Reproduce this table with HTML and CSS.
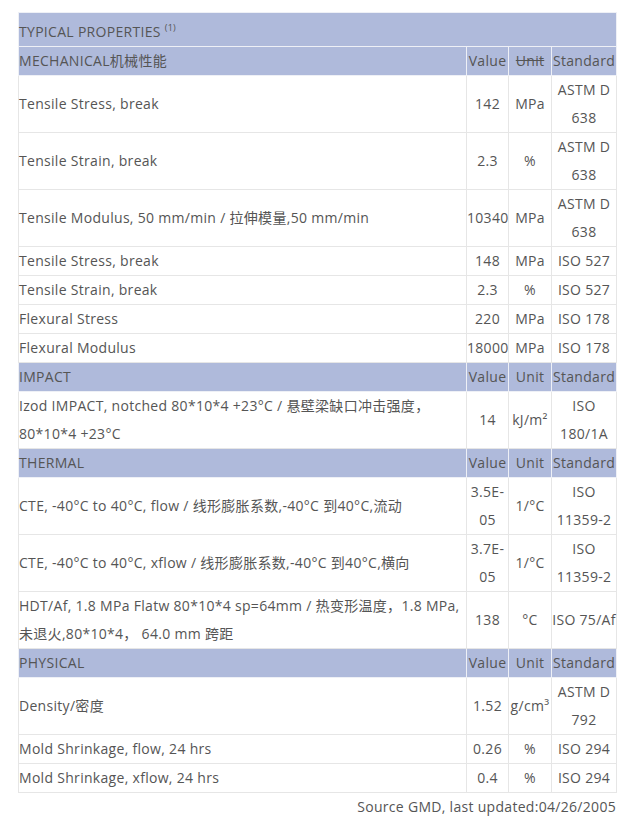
FILE: index.html
```html
<!DOCTYPE html>
<html lang="zh-CN">
<head>
  <meta charset="UTF-8">
  <meta name="viewport" content="width=device-width, initial-scale=1.0">
  <title>Typical Properties</title>
  <link rel="stylesheet" href="styles.css">
</head>
<body>
  <div class="sheet">
    <table class="props">
      <colgroup>
        <col class="col-name">
        <col class="col-value">
        <col class="col-unit">
        <col class="col-std">
      </colgroup>
      <tr class="title-row">
        <td colspan="4">TYPICAL PROPERTIES <sup>(1)</sup></td>
      </tr>

      <tr class="group-row">
        <td>MECHANICAL机械性能</td>
        <td>Value</td>
        <td><s>Unit</s></td>
        <td>Standard</td>
      </tr>
      <tr>
        <td>Tensile Stress, break</td>
        <td>142</td>
        <td>MPa</td>
        <td>ASTM D 638</td>
      </tr>
      <tr>
        <td>Tensile Strain, break</td>
        <td>2.3</td>
        <td>%</td>
        <td>ASTM D 638</td>
      </tr>
      <tr>
        <td>Tensile Modulus, 50 mm/min / 拉伸模量,50 mm/min</td>
        <td>10340</td>
        <td>MPa</td>
        <td>ASTM D 638</td>
      </tr>
      <tr>
        <td>Tensile Stress, break</td>
        <td>148</td>
        <td>MPa</td>
        <td>ISO 527</td>
      </tr>
      <tr>
        <td>Tensile Strain, break</td>
        <td>2.3</td>
        <td>%</td>
        <td>ISO 527</td>
      </tr>
      <tr>
        <td>Flexural Stress</td>
        <td>220</td>
        <td>MPa</td>
        <td>ISO 178</td>
      </tr>
      <tr>
        <td>Flexural Modulus</td>
        <td>18000</td>
        <td>MPa</td>
        <td>ISO 178</td>
      </tr>

      <tr class="group-row">
        <td>IMPACT</td>
        <td>Value</td>
        <td>Unit</td>
        <td>Standard</td>
      </tr>
      <tr>
        <td>Izod IMPACT, notched 80*10*4 +23°C / 悬壁梁缺口冲击强度，80*10*4 +23°C</td>
        <td>14</td>
        <td>kJ/m²</td>
        <td>ISO 180/1A</td>
      </tr>

      <tr class="group-row">
        <td>THERMAL</td>
        <td>Value</td>
        <td>Unit</td>
        <td>Standard</td>
      </tr>
      <tr>
        <td>CTE, -40°C to 40°C, flow / 线形膨胀系数,-40°C 到40°C,流动</td>
        <td>3.5E-05</td>
        <td>1/°C</td>
        <td>ISO 11359-2</td>
      </tr>
      <tr>
        <td>CTE, -40°C to 40°C, xflow / 线形膨胀系数,-40°C 到40°C,横向</td>
        <td>3.7E-05</td>
        <td>1/°C</td>
        <td>ISO 11359-2</td>
      </tr>
      <tr>
        <td>HDT/Af, 1.8 MPa Flatw 80*10*4 sp=64mm / 热变形温度，1.8 MPa, 未退火,80*10*4， 64.0 mm 跨距</td>
        <td>138</td>
        <td>°C</td>
        <td>ISO 75/Af</td>
      </tr>

      <tr class="group-row">
        <td>PHYSICAL</td>
        <td>Value</td>
        <td>Unit</td>
        <td>Standard</td>
      </tr>
      <tr>
        <td>Density/密度</td>
        <td>1.52</td>
        <td>g/cm³</td>
        <td>ASTM D 792</td>
      </tr>
      <tr>
        <td>Mold Shrinkage, flow, 24 hrs</td>
        <td>0.26</td>
        <td>%</td>
        <td>ISO 294</td>
      </tr>
      <tr>
        <td>Mold Shrinkage, xflow, 24 hrs</td>
        <td>0.4</td>
        <td>%</td>
        <td>ISO 294</td>
      </tr>
    </table>
    <p class="source">Source GMD, last updated:04/26/2005</p>
  </div>
</body>
</html>
```

FILE: styles.css
```css
body {
  margin: 0;
  background-color: #fff;
  color: #555;
  font-family: "Open Sans", "Noto Sans CJK SC", sans-serif;
  font-size: 14px;
  letter-spacing: 0.3px;
}
.sheet {
  width: 598px;
  padding: 12px 0 0 18px;
}
.props {
  width: 598px;
  table-layout: fixed;
  border-collapse: collapse;
  border: 1px solid #222;
}
.col-name {
  width: 448px;
}
.col-value {
  width: 42px;
}
.col-unit {
  width: 43px;
}
.col-std {
  width: 65px;
}
.props td {
  border: 1px solid #e6e6e6;
  padding: 0;
  line-height: 28px;
  text-align: center;
  vertical-align: middle;
}
.props td:first-child {
  text-align: left;
}
.title-row td,
.group-row td {
  background-color: #afbadb;
  border-color: #eef0f6;
}
.title-row td {
  padding-top: 5px;
}
.title-row sup {
  font-size: 9px;
  line-height: 0;
}
.source {
  margin: 0;
  text-align: right;
  line-height: 28px;
}
```
